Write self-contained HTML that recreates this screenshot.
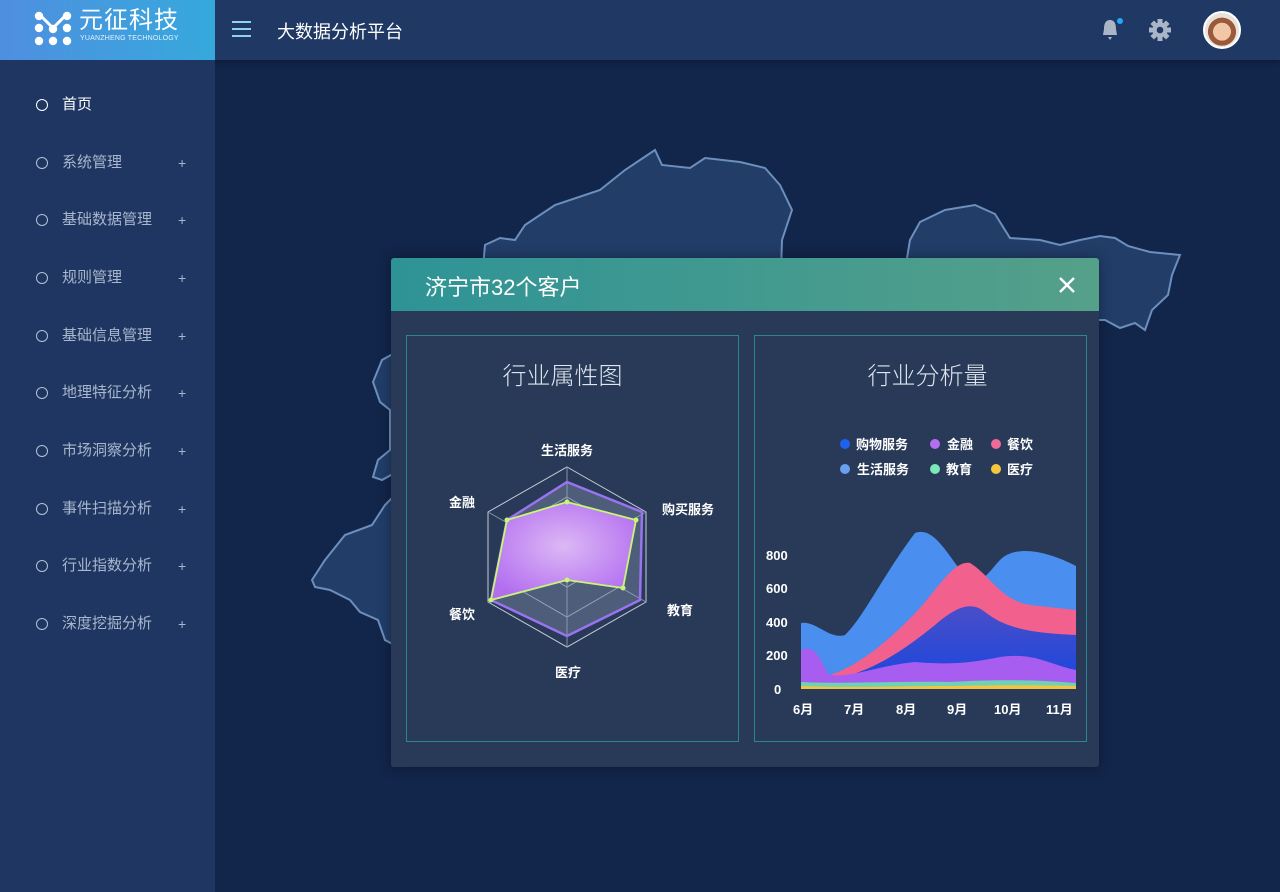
<!DOCTYPE html>
<html><head><meta charset="utf-8">
<style>
*{margin:0;padding:0;box-sizing:border-box}
body{width:1280px;height:892px;overflow:hidden;background:#12254a;font-family:"Liberation Sans","Noto Sans CJK SC",sans-serif;position:relative}
.hdr{position:absolute;left:0;top:0;width:1280px;height:60px;background:#1f3864;box-shadow:0 2px 6px rgba(0,0,0,.3)}
.logo{position:absolute;left:0;top:0;width:215px;height:60px;background:linear-gradient(90deg,#4f8fe0,#36a9dc)}
.side{position:absolute;left:0;top:60px;width:215px;height:832px;background:#1e3661}
.item{position:absolute;left:0;width:215px;height:20px;color:#a9b7cd;font-size:15px;line-height:20px}
.item i{position:absolute;left:36px;top:4px;width:12px;height:12px;border:1.5px solid #b5c2d6;border-radius:50%}
.item span{position:absolute;left:62px}
.item b{position:absolute;left:178px;font-weight:normal;font-size:14px}
.modal{position:absolute;left:391px;top:258px;width:708px;height:509px;background:#283a58;border-radius:3px;box-shadow:0 0 12px rgba(0,0,0,.35)}
.mh{position:absolute;left:0;top:0;width:708px;height:53px;background:linear-gradient(90deg,#2e9396,#55a089);border-radius:3px 3px 0 0}
.panel{position:absolute;top:77px;height:407px;width:333px;border:1px solid #2c8690;background:#283a58}
.pt{position:absolute;top:20px;width:100%;text-align:center;color:#dfe6ef;font-size:24px;font-weight:300}
</style></head><body>
<svg style="position:absolute;left:0;top:0" width="1280" height="892">
<g fill="#213d68" stroke="#6d8fbc" stroke-width="2">
<path d="M480,300 L485,245 L500,238 L515,240 L525,225 L555,205 L600,190 L625,170 L640,160 L655,150 L662,165 L690,168 L705,158 L740,162 L765,168 L780,185 L792,210 L782,240 L780,300 Z"/>
<path d="M900,300 L910,240 L920,222 L945,210 L975,205 L995,214 L1010,238 L1040,240 L1060,245 L1080,240 L1100,236 L1115,238 L1128,246 L1150,252 L1180,255 L1172,275 L1168,295 L1152,310 L1145,330 L1135,323 L1120,328 L1105,320 L1090,320 Z"/>
<path d="M400,350 L382,360 L373,382 L380,402 L390,410 L390,450 L378,460 L373,477 L382,480 L400,470 L400,490 L385,505 L372,525 L345,535 L325,560 L312,580 L315,587 L330,590 L350,600 L360,612 L378,620 L385,640 L400,648 Z"/>
</g>
</svg>
<div class="hdr">
 <div class="logo">
  <svg style="position:absolute;left:34px;top:11px" width="38" height="36">
   <g fill="#fff"><circle cx="5" cy="5" r="4.2"/><circle cx="33" cy="5" r="4.2"/><circle cx="5" cy="17" r="4.2"/><circle cx="33" cy="17" r="4.2"/><circle cx="5" cy="30" r="4.2"/><circle cx="19" cy="30" r="4.2"/><circle cx="33" cy="30" r="4.2"/><circle cx="19" cy="18" r="4.2"/><path d="M8,6 L19,17 L30,6" stroke="#fff" stroke-width="3" fill="none"/></g>
  </svg>
  <div style="position:absolute;left:79px;top:8px;color:#fff;font-size:24px;letter-spacing:1px;line-height:26px">元征科技</div>
  <div style="position:absolute;left:80px;top:35px;color:#e6f2ff;font-size:7px;letter-spacing:.2px">YUANZHENG TECHNOLOGY</div>
 </div>
 <div style="position:absolute;left:232px;top:21px;width:19px">
  <div style="height:2px;background:#8fd3f0;margin-bottom:5px"></div><div style="height:2px;background:#8fd3f0;margin-bottom:5px"></div><div style="height:2px;background:#8fd3f0"></div>
 </div>
 <div style="position:absolute;left:277px;top:18px;color:#fff;font-size:18px">大数据分析平台</div>
 <svg style="position:absolute;left:1100px;top:17px" width="24" height="26"><path d="M10,3 C5,3 4,8 4,12 L3,18 L17,18 L16,12 C16,8 15,3 10,3 Z M8,20 L12,20 L10,23 Z" fill="#aab6c8"/><circle cx="20" cy="4" r="3" fill="#27a6f5"/></svg>
 <svg style="position:absolute;left:1149px;top:19px" width="22" height="22" viewBox="-11 -11 22 22"><g fill="#aab6c8"><circle r="7.5"/><rect x="-2.5" y="-11" width="5" height="22"/><rect x="-2.5" y="-11" width="5" height="22" transform="rotate(45)"/><rect x="-2.5" y="-11" width="5" height="22" transform="rotate(90)"/><rect x="-2.5" y="-11" width="5" height="22" transform="rotate(135)"/></g><circle r="3.3" fill="#1f3864"/></svg>
 <div style="position:absolute;left:1203px;top:11px;width:38px;height:38px;border-radius:50%;border:2px solid #fff;background:radial-gradient(circle at 50% 55%,#f1c7a8 0 35%,#9a5a3a 36% 55%,#e9e2dc 56%)"></div>
</div>
<div class="side">
 <div class="item" style="top:35px;color:#fff"><i style="border-color:#fff"></i><span>首页</span></div>
 <div class="item" style="top:93px"><i></i><span>系统管理</span><b>+</b></div>
 <div class="item" style="top:150px"><i></i><span>基础数据管理</span><b>+</b></div>
 <div class="item" style="top:208px"><i></i><span>规则管理</span><b>+</b></div>
 <div class="item" style="top:266px"><i></i><span>基础信息管理</span><b>+</b></div>
 <div class="item" style="top:323px"><i></i><span>地理特征分析</span><b>+</b></div>
 <div class="item" style="top:381px"><i></i><span>市场洞察分析</span><b>+</b></div>
 <div class="item" style="top:439px"><i></i><span>事件扫描分析</span><b>+</b></div>
 <div class="item" style="top:496px"><i></i><span>行业指数分析</span><b>+</b></div>
 <div class="item" style="top:554px"><i></i><span>深度挖掘分析</span><b>+</b></div>
</div>
<div class="modal">
 <div class="mh">
  <div style="position:absolute;left:34px;top:12px;color:#fff;font-size:22px">济宁市32个客户</div>
  <svg style="position:absolute;left:667px;top:18px" width="18" height="18"><path d="M2,2 L16,16 M16,2 L2,16" stroke="#fff" stroke-width="2.4"/></svg>
 </div>
 <div class="panel" style="left:15px"><div class="pt" style="left:-10px">行业属性图</div></div>
 <div class="panel" style="left:363px"><div class="pt" style="left:7px">行业分析量</div></div>
</div>
<svg style="position:absolute;left:0;top:0" width="1280" height="892" font-family="Liberation Sans,Noto Sans CJK SC,sans-serif">
<defs>
<radialGradient id="rg" cx="50%" cy="45%" r="60%"><stop offset="0" stop-color="#dcb8f5"/><stop offset="1" stop-color="#b36ef0"/></radialGradient>
<linearGradient id="db" x1="0" y1="0" x2="0" y2="1"><stop offset="0" stop-color="#4a4ec8"/><stop offset="1" stop-color="#1746e0"/></linearGradient>
</defs>
<g fill="none" stroke="#c8ccd8" stroke-width="1">
<polygon points="567,467 646,512 646,602 567,647 488,602 488,512"/>
<polygon points="567,497 619,527 619,587 567,617 515,587 515,527" stroke="#9aa3b5"/>
<polygon points="567,527 593,542 593,572 567,587 541,572 541,542" stroke="#9aa3b5"/>
<path d="M567,467 L567,647 M488,512 L646,602 M488,602 L646,512" stroke="#8891a5"/>
</g>
<polygon points="567,482 642,512 640,600 567,636 491,600 507,520" fill="rgba(150,160,185,.35)" stroke="#9a73f0" stroke-width="2.5"/>
<polygon points="567,502 636,520 623,588 567,580 491,600 507,520" fill="url(#rg)" stroke="#c9f57a" stroke-width="1.8"/>
<g fill="#c9f57a"><circle cx="567" cy="502" r="2.5"/><circle cx="636" cy="520" r="2.5"/><circle cx="623" cy="588" r="2.5"/><circle cx="567" cy="580" r="2.5"/><circle cx="491" cy="600" r="2.5"/><circle cx="507" cy="520" r="2.5"/></g>
<g fill="#fff" font-size="13" font-weight="bold" text-anchor="middle">
<text x="567" y="455">生活服务</text><text x="688" y="514">购买服务</text><text x="680" y="615">教育</text><text x="568" y="677">医疗</text><text x="462" y="619">餐饮</text><text x="462" y="507">金融</text>
</g>
<g font-size="13" font-weight="bold" fill="#fff">
<circle cx="845" cy="444" r="5" fill="#1e63f0"/><text x="856" y="449">购物服务</text>
<circle cx="935" cy="444" r="5" fill="#b46ff0"/><text x="947" y="449">金融</text>
<circle cx="996" cy="444" r="5" fill="#f06a9a"/><text x="1007" y="449">餐饮</text>
<circle cx="845" cy="469" r="5" fill="#6aa0f0"/><text x="857" y="474">生活服务</text>
<circle cx="935" cy="469" r="5" fill="#7ae8b8"/><text x="946" y="474">教育</text>
<circle cx="996" cy="469" r="5" fill="#f5c540"/><text x="1007" y="474">医疗</text>
</g>
<path d="M801,623 C815,620 830,640 845,635 C865,615 880,580 915,533 C935,525 950,560 965,575 C980,590 990,570 1000,560 C1015,545 1045,550 1076,566 L1076,689 L801,689 Z" fill="#4a8ef0"/>
<path d="M830,675 C860,665 890,640 920,608 C940,585 955,560 970,563 C990,575 1000,600 1030,605 L1076,610 L1076,689 L830,689 Z" fill="#f2608d"/>
<path d="M840,678 C880,668 910,645 935,625 C955,608 970,600 985,612 C1005,628 1030,633 1076,635 L1076,689 L840,689 Z" fill="url(#db)"/>
<path d="M801,650 C812,645 818,652 828,674 C845,680 880,665 915,662 C950,665 970,663 1000,657 C1035,652 1050,665 1076,670 L1076,689 L801,689 Z" fill="#a75df0"/>
<path d="M801,682 C840,684 900,681 950,682 C1000,679 1040,680 1076,683 L1076,689 L801,689 Z" fill="#6fd1b6"/>
<path d="M801,686 C850,688 900,686 950,686 C1000,685 1040,685 1076,686 L1076,689 L801,689 Z" fill="#f2c43f"/>
<g fill="#fff" font-size="13" font-weight="bold">
<text x="766" y="560">800</text><text x="766" y="593">600</text><text x="766" y="627">400</text><text x="766" y="660">200</text><text x="774" y="694">0</text>
<text x="793" y="714">6月</text><text x="844" y="714">7月</text><text x="896" y="714">8月</text><text x="947" y="714">9月</text><text x="994" y="714">10月</text><text x="1046" y="714">11月</text>
</g>
</svg>
</body></html>
